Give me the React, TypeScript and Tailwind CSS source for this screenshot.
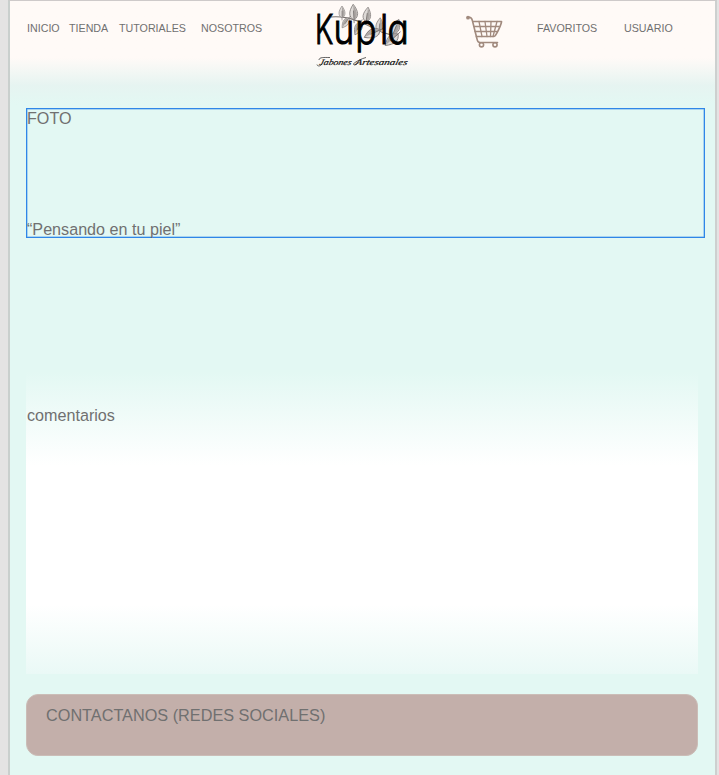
function Leaf({ x, y, angle, size = 1 }: { x: number; y: number; angle: number; size?: number }) {
  return (
    <g transform={`translate(${x} ${y}) rotate(${angle}) scale(${size})`}>
      <path d="M0 0C-5-3-5-8 0-15C5-8 5-3 0 0Z" fill="#dedad7" stroke="#85807e" strokeWidth="0.8" />
      <path d="M0 0C4-3 4-8 0-14Z" fill="#aaa5a2" />
      <path d="M0 3V-9" stroke="#6c6765" strokeWidth="0.7" />
    </g>
  );
}

function Logo() {
  return (
    <svg className="block h-[72px] w-[100px]" viewBox="312 0 100 72" fill="none">
      <path d="M331 17C344 16 352 19 361 22C372 27 383 35 396 35" stroke="#77716f" strokeWidth="1.1" />
      <Leaf x={342} y={18} angle={0} size={0.8} />
      <Leaf x={354} y={20} angle={-3} size={1.05} />
      <Leaf x={366} y={22} angle={8} size={1} />
      <Leaf x={349} y={18} angle={215} size={0.8} />
      <Leaf x={361} y={22} angle={205} size={0.95} />
      <Leaf x={379} y={32} angle={5} size={0.95} />
      <Leaf x={380} y={30} angle={245} size={1.15} />
      <Leaf x={398} y={34} angle={228} size={1.15} />
      <Leaf x={393} y={34} angle={22} size={1.05} />
      <g fill="#000" className="font-[Inter,sans-serif] text-[41px] font-light [font-feature-settings:'cv11']" stroke="#000">
        <text transform="translate(315 44) scale(.69 1)" strokeWidth="1.1">K</text>
        <text transform="translate(0 44) scale(.86 1)" x="387.8 413 441.8 450.5" strokeWidth="1">upla</text>
      </g>
      <g transform="translate(0 65) skewX(-14)" fill="#111" stroke="#111" strokeWidth="0.2" className="font-['Liberation_Serif',serif] text-[8.5px] italic">
        <text x="319" y="0" textLength="32" lengthAdjust="spacingAndGlyphs">Jabones</text>
        <text x="355" y="0" textLength="52" lengthAdjust="spacingAndGlyphs">Artesanales</text>
      </g>
      <path d="M319 60C319 57 324 57.5 330 57.5M322 64C320 67 317 66 317 64.5M358 63C354 67 352 64 355 62.5C359 60 361 59 366 57.5" stroke="#222" strokeWidth="0.7" />
    </svg>
  );
}

function Cart() {
  return (
    <svg className="block h-[34px] w-[38px]" viewBox="466 15 38 34" fill="none" stroke="#a18a7e" strokeLinejoin="round" strokeLinecap="round">
      <path d="M468 17.5C471 16.5 472 19 472.5 21L477 39Q477.5 42.5 480 42.5H497.5" strokeWidth="1.6" />
      <path d="M473.5 21.5H501.5C501.5 24 496 36.5 494 36.5H476.5" strokeWidth="1.7" />
      <path d="M474 26.5H499M475 31.5H496.5M479 21.5L482 36.5M485 21.5L487 36.5M491 21.5L490.5 36.5M497 21.5L493 36.5" strokeWidth="1.3" />
      <circle cx="468" cy="17.7" r="1.9" fill="#a18a7e" stroke="none" />
      <circle cx="481.5" cy="44.8" r="2.1" strokeWidth="1.6" />
      <circle cx="495" cy="44.8" r="2.1" strokeWidth="1.6" />
    </svg>
  );
}

export default function App() {
  return (
    <div className="h-[775px] w-[719px] overflow-hidden bg-[#e4e3e3] pl-2 font-['Liberation_Sans',Arial,sans-serif] text-[16.15px] leading-[18px] text-[#707070]">
      <div className="flex h-full w-[709px] flex-col border-t border-r-2 border-l-2 border-t-[#cecaca] border-r-[#cdd0cf] border-l-[#c9cfcd] bg-[#e3f8f3]">
        <header className="flex h-[107px] shrink-0 items-start bg-linear-to-b from-[#fffaf7] from-[53%] via-[#e6f4f1] via-[79%] to-[#e3f8f3] to-[96%] pl-[17px] text-[10.7px] leading-3">
          <nav className="flex w-[285px] shrink-0 pt-[21px]">
            <a className="w-[42px]">INICIO</a>
            <a className="w-[50px]">TIENDA</a>
            <a className="w-[82px]">TUTORIALES</a>
            <a>NOSOTROS</a>
          </nav>
          <div className="-mt-px w-[154px] shrink-0"><Logo /></div>
          <div className="w-[71px] shrink-0 pt-[14px]"><Cart /></div>
          <a className="w-[87px] pt-[21px]">FAVORITOS</a>
          <a className="pt-[21px]">USUARIO</a>
        </header>

        <main className="flex flex-col pl-4">
          <section className="flex h-[130px] w-[679px] flex-col border border-[#2f86e8] shadow-[inset_0_0_0_0.5px_#6eafeb]">
            <p>FOTO</p>
            <p className="pt-[93px]">“Pensando en tu piel”</p>
          </section>
          <section className="mt-[134px] h-[302px] w-[672px] bg-[linear-gradient(to_bottom,#e3f8f3_0%,white_31%,white_77%,#eaf9f6_100%)] pt-[34px] pl-px">
            comentarios
          </section>
          <footer className="mt-5 h-[62px] w-[672px] rounded-[12px] border border-[#cbbdb7] bg-[#c3afaa] pt-[11px] pl-[19px] text-[16.25px]">
            CONTACTANOS (REDES SOCIALES)
          </footer>
        </main>
      </div>
    </div>
  );
}
